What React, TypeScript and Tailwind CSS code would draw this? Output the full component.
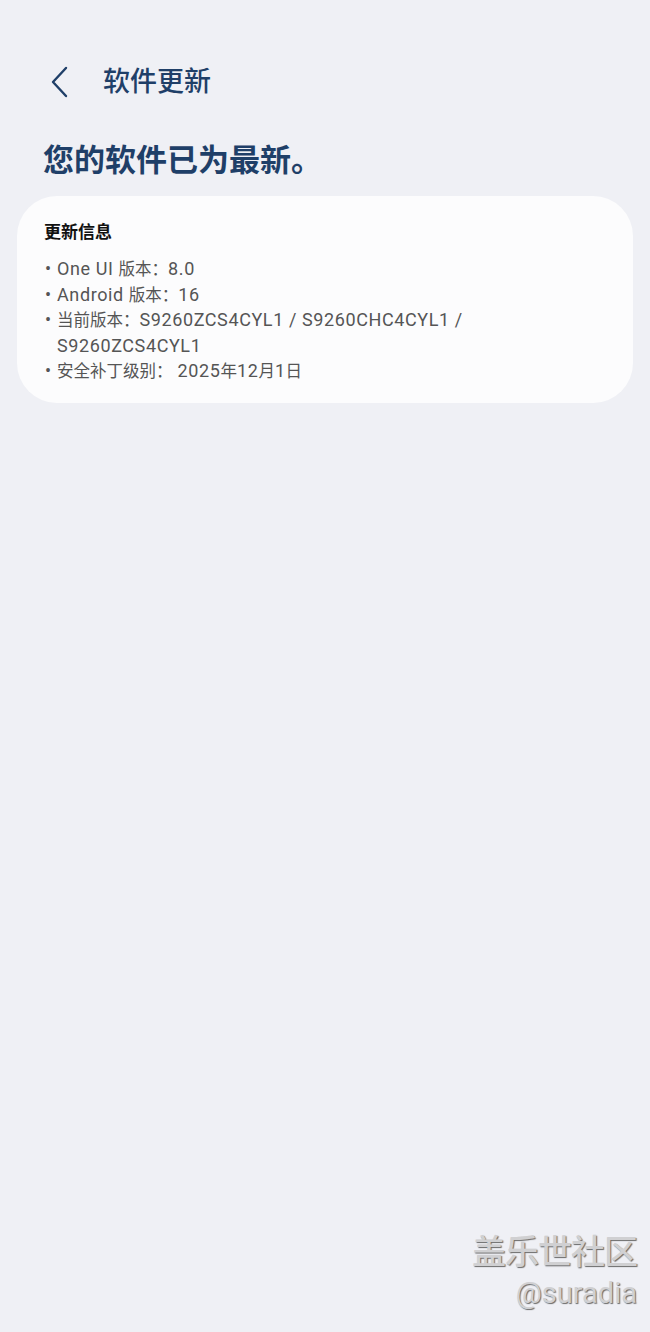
function Mixed({ text }: { text: string }) {
  const parts = text.split(/([\u3000-\u303f\u4e00-\u9fff\uff00-\uffef]+)/).filter((p) => p.length > 0);
  return (
    <span className="block h-[25.5px] whitespace-nowrap">
      {parts.map((p, i) =>
        /[\u3000-\u303f\u4e00-\u9fff\uff00-\uffef]/.test(p) ? (
          <span key={i} className="text-[16.5px] tracking-normal align-baseline">{p}</span>
        ) : (
          <span key={i}>{p}</span>
        )
      )}
    </span>
  );
}

export default function App() {
  const font = { fontFamily: '"Roboto", "Noto Sans CJK SC", sans-serif' };
  const items: string[][] = [
    ["One UI 版本：8.0"],
    ["Android 版本：16"],
    ["当前版本：S9260ZCS4CYL1 / S9260CHC4CYL1 /", "S9260ZCS4CYL1"],
    ["安全补丁级别： 2025年12月1日"],
  ];
  return (
    <div className="w-[650px] h-[1332px] bg-[#eff0f5] flex flex-col relative overflow-hidden" style={font}>
      <div className="flex items-center h-[30px] mt-[67px] pl-[50px]">
        <svg width="20" height="32" viewBox="0 0 20 32" fill="none">
          <path d="M16 2 L3 16 L16 30" stroke="#1f3f68" strokeWidth="2.4" strokeLinecap="round" strokeLinejoin="round" />
        </svg>
        <span className="ml-[33px] text-[27px] leading-[30px] font-medium text-[#1f3f68]">软件更新</span>
      </div>
      <div className="mt-[46px] ml-[43px] text-[31px] leading-[36px] font-bold text-[#1f3f68]">您的软件已为最新。</div>
      <div className="mx-[17px] mt-[17px] h-[207px] bg-[#fcfcfd] rounded-[40px] pl-[27px] pt-[24px]">
        <div className="text-[17px] leading-[24px] font-bold text-[#111]">更新信息</div>
        <div className="mt-[12px] flex flex-col text-[18px] leading-[25.5px] tracking-[0.6px] text-[#555]">
          {items.map((lines, i) => (
            <div key={i} className="flex">
              <span className="w-[13px] shrink-0 pl-[1px] h-[25.5px]">•</span>
              <div className="flex flex-col">
                {lines.map((l, j) => (
                  <Mixed key={j} text={l} />
                ))}
              </div>
            </div>
          ))}
        </div>
      </div>
      <div className="absolute right-[13px] bottom-[22px] flex flex-col items-end text-[#d0d0d2]" style={{ textShadow: "1px 1px 1px #6a6a6a" }}>
        <span className="text-[34px] leading-[40px] font-medium tracking-[-1px]">盖乐世社区</span>
        <span className="text-[29px] leading-[34px] mt-[4px]">@suradia</span>
      </div>
    </div>
  );
}
